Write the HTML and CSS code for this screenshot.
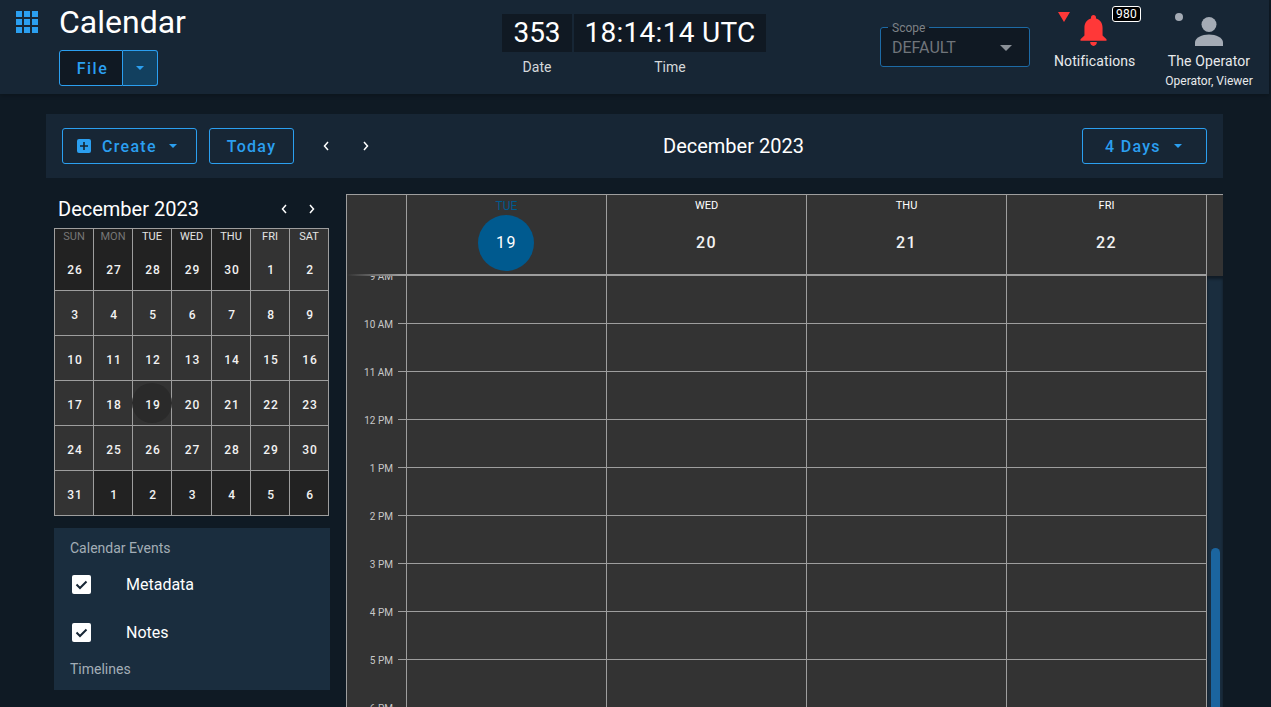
FILE: index.html
```html
<!DOCTYPE html>
<html lang="en">
<head>
    <meta charset="UTF-8">
    <title>Calendar</title>
    <link rel="stylesheet" href="styles.css">
</head>
<body>
    <header class="app-bar">
        <div class="brand">
            <svg class="apps-icon" width="22" height="22" viewBox="0 0 22 22" fill="#2b9ff0">
                <rect x="0" y="0" width="6" height="6"/><rect x="8" y="0" width="6" height="6"/><rect x="16" y="0" width="6" height="6"/>
                <rect x="0" y="8" width="6" height="6"/><rect x="8" y="8" width="6" height="6"/><rect x="16" y="8" width="6" height="6"/>
                <rect x="0" y="16" width="6" height="6"/><rect x="8" y="16" width="6" height="6"/><rect x="16" y="16" width="6" height="6"/>
            </svg>
            <div class="brand-text">
                <h1>Calendar</h1>
                <div class="split-btn">
                    <button class="split-main">File</button>
                    <button class="split-caret"><svg width="8" height="4" viewBox="0 0 8 4"><path d="M0 0h8L4 4z" fill="#2b9ff0"/></svg></button>
                </div>
            </div>
        </div>

        <div class="clock">
            <div class="clock-col clock-date">
                <div class="clock-box">353</div>
                <div class="clock-label">Date</div>
            </div>
            <div class="clock-col clock-time">
                <div class="clock-box">18:14:14 UTC</div>
                <div class="clock-label">Time</div>
            </div>
        </div>

        <fieldset class="scope">
            <legend>Scope</legend>
            <span>DEFAULT</span>
            <svg width="12" height="6" viewBox="0 0 12 6"><path d="M0 0h12L6 6z" fill="#8a9097"/></svg>
        </fieldset>

        <div class="notify">
            <span class="notify-flag"></span>
            <span class="notify-count">980</span>
            <svg class="bell" width="27" height="32" viewBox="0 0 28 33" fill="#ff3838">
                <path d="M14 0c1.6 0 2.6 1 2.6 2.6v.9c4.300 1.200 6.800 4.800 6.800 9.500v8.200L27.500 25v1.500H.5V25l4.100-3.800V13c0-4.700 2.500-8.300 6.800-9.500v-.9C11.400 1 12.400 0 14 0z"/>
                <path d="M10.500 28h7c0 2.400-1.400 4-3.500 4s-3.500-1.600-3.500-4z"/>
            </svg>
            <div class="notify-label">Notifications</div>
        </div>

        <div class="user">
            <span class="user-dot"></span>
            <svg class="person" width="28" height="29" viewBox="0 0 28 29" fill="#a4abb5">
                <circle cx="14" cy="7.500" r="7.500"/>
                <path d="M0 29v-3.500C0 20.500 7 17.500 14 17.500s14 3 14 8V29z"/>
            </svg>
            <div class="user-name">The Operator</div>
            <div class="user-role">Operator, Viewer</div>
        </div>
    </header>

    <main class="page">
        <section class="toolbar">
            <button class="btn btn-create">
                <svg width="14" height="14" viewBox="0 0 14 14"><rect width="14" height="14" rx="2" fill="#2b9ff0"/><path d="M6.200 3h1.600v3.200H11v1.600H7.800V11H6.200V7.800H3V6.200h3.200z" fill="#14242f"/></svg>
                <span>Create</span>
                <svg width="8" height="4" viewBox="0 0 8 4"><path d="M0 0h8L4 4z" fill="#2b9ff0"/></svg>
            </button>
            <button class="btn btn-today">Today</button>
            <button class="nav-btn nav-first"><svg width="6" height="10" viewBox="0 0 6 10"><path d="M5 1L1.500 5 5 9" fill="none" stroke="#fff" stroke-width="1.500"/></svg></button>
            <button class="nav-btn"><svg width="6" height="10" viewBox="0 0 6 10"><path d="M1 1l3.500 4L1 9" fill="none" stroke="#fff" stroke-width="1.500"/></svg></button>
            <h2 class="toolbar-title">December 2023</h2>
            <button class="btn btn-range">
                <span>4 Days</span>
                <svg width="8" height="4" viewBox="0 0 8 4"><path d="M0 0h8L4 4z" fill="#2b9ff0"/></svg>
            </button>
        </section>

        <div class="content">
            <aside class="sidebar">
                <div class="mini-head">
                    <span class="mini-title">December 2023</span>
                    <svg class="mini-prev" width="6" height="10" viewBox="0 0 6 10"><path d="M5 1L1.500 5 5 9" fill="none" stroke="#fff" stroke-width="1.500"/></svg>
                    <svg class="mini-next" width="6" height="10" viewBox="0 0 6 10"><path d="M1 1l3.500 4L1 9" fill="none" stroke="#fff" stroke-width="1.500"/></svg>
                </div>
                <div class="mini-grid">
                    <div class="cell top muted"><span class="wd dim">SUN</span><span>26</span></div>
                    <div class="cell top muted"><span class="wd dim">MON</span><span>27</span></div>
                    <div class="cell top muted"><span class="wd">TUE</span><span>28</span></div>
                    <div class="cell top muted"><span class="wd">WED</span><span>29</span></div>
                    <div class="cell top muted"><span class="wd">THU</span><span>30</span></div>
                    <div class="cell top"><span class="wd">FRI</span><span>1</span></div>
                    <div class="cell top"><span class="wd">SAT</span><span>2</span></div>

                    <div class="cell"><span>3</span></div>
                    <div class="cell"><span>4</span></div>
                    <div class="cell"><span>5</span></div>
                    <div class="cell"><span>6</span></div>
                    <div class="cell"><span>7</span></div>
                    <div class="cell"><span>8</span></div>
                    <div class="cell"><span>9</span></div>

                    <div class="cell"><span>10</span></div>
                    <div class="cell"><span>11</span></div>
                    <div class="cell"><span>12</span></div>
                    <div class="cell"><span>13</span></div>
                    <div class="cell"><span>14</span></div>
                    <div class="cell"><span>15</span></div>
                    <div class="cell"><span>16</span></div>

                    <div class="cell"><span>17</span></div>
                    <div class="cell"><span>18</span></div>
                    <div class="cell today"><span>19</span></div>
                    <div class="cell"><span>20</span></div>
                    <div class="cell"><span>21</span></div>
                    <div class="cell"><span>22</span></div>
                    <div class="cell"><span>23</span></div>

                    <div class="cell"><span>24</span></div>
                    <div class="cell"><span>25</span></div>
                    <div class="cell"><span>26</span></div>
                    <div class="cell"><span>27</span></div>
                    <div class="cell"><span>28</span></div>
                    <div class="cell"><span>29</span></div>
                    <div class="cell"><span>30</span></div>

                    <div class="cell"><span>31</span></div>
                    <div class="cell muted"><span>1</span></div>
                    <div class="cell muted"><span>2</span></div>
                    <div class="cell muted"><span>3</span></div>
                    <div class="cell muted"><span>4</span></div>
                    <div class="cell muted"><span>5</span></div>
                    <div class="cell muted"><span>6</span></div>
                </div>

                <div class="events">
                    <div class="events-title">Calendar Events</div>
                    <label class="check-row">
                        <svg width="19" height="19" viewBox="0 0 19 19"><rect width="19" height="19" rx="2" fill="#fff"/><path d="M4.500 9.500l3.500 3.500 6.500-6.500" fill="none" stroke="#172635" stroke-width="2"/></svg>
                        <span>Metadata</span>
                    </label>
                    <label class="check-row">
                        <svg width="19" height="19" viewBox="0 0 19 19"><rect width="19" height="19" rx="2" fill="#fff"/><path d="M4.500 9.500l3.500 3.500 6.500-6.500" fill="none" stroke="#172635" stroke-width="2"/></svg>
                        <span>Notes</span>
                    </label>
                    <div class="events-title timelines">Timelines</div>
                </div>
            </aside>

            <section class="week">
                <div class="week-head">
                    <div class="head-gutter"></div>
                    <div class="head-day is-today"><span class="head-wd">TUE</span><span class="head-num">19</span></div>
                    <div class="head-day"><span class="head-wd">WED</span><span class="head-num">20</span></div>
                    <div class="head-day"><span class="head-wd">THU</span><span class="head-num">21</span></div>
                    <div class="head-day"><span class="head-wd">FRI</span><span class="head-num">22</span></div>
                    <div class="head-end"></div>
                </div>
                <div class="week-body">
                    <div class="hours">
                        <div class="hour"><span class="hour-label">9 AM</span><i></i><b></b><b></b><b></b><b></b></div>
                        <div class="hour"><span class="hour-label">10 AM</span><i></i><b></b><b></b><b></b><b></b></div>
                        <div class="hour"><span class="hour-label">11 AM</span><i></i><b></b><b></b><b></b><b></b></div>
                        <div class="hour"><span class="hour-label">12 PM</span><i></i><b></b><b></b><b></b><b></b></div>
                        <div class="hour"><span class="hour-label">1 PM</span><i></i><b></b><b></b><b></b><b></b></div>
                        <div class="hour"><span class="hour-label">2 PM</span><i></i><b></b><b></b><b></b><b></b></div>
                        <div class="hour"><span class="hour-label">3 PM</span><i></i><b></b><b></b><b></b><b></b></div>
                        <div class="hour"><span class="hour-label">4 PM</span><i></i><b></b><b></b><b></b><b></b></div>
                        <div class="hour"><span class="hour-label">5 PM</span><i></i><b></b><b></b><b></b><b></b></div>
                        <div class="hour"><span class="hour-label">6 PM</span><i></i><b></b><b></b><b></b><b></b></div>
                    </div>
                    <div class="scroll-track"><div class="scroll-thumb"></div></div>
                </div>
            </section>
        </div>
    </main>
</body>
</html>
```

FILE: styles.css
```css
* { box-sizing: border-box; }
html, body { height: 707px; overflow: hidden; }
body { margin: 0; background-color: #0f1a24; font-family: Roboto, "Liberation Sans", sans-serif; color: #fff; }
button { font-family: inherit; cursor: pointer; }
h1, h2 { margin: 0; font-weight: 400; }

/* top bar */
.app-bar { display: flex; width: 1269px; height: 94px; background-color: #172635; box-shadow: 0 2px 4px rgba(0,0,0,0.2); }
.brand { display: flex; width: 502px; }
.apps-icon { margin: 11px 0 0 16px; }
.brand-text { margin-left: 21px; padding-top: 3px; }
.brand-text h1 { font-size: 32px; line-height: 38px; }
.split-btn { display: flex; margin-top: 9px; height: 36px; width: 99px; }
.split-main { width: 64px; background-color: #101923; border: 1px solid #2b9ff0; border-radius: 3px 0 0 3px; color: #2b9ff0; font-size: 16px; font-weight: 500; letter-spacing: 1.5px; padding: 0 0 0 3px; }
.split-caret { width: 35px; background-color: #12405f; border: 1px solid #2b9ff0; border-left: 0; border-radius: 0 3px 3px 0; padding: 0; display: flex; align-items: center; justify-content: center; }

.clock { display: flex; padding-top: 14px; gap: 2px; width: 264px; }
.clock-col { text-align: center; }
.clock-date { width: 70px; }
.clock-time { width: 192px; }
.clock-box { height: 38px; line-height: 38px; background-color: #101923; font-size: 28px; }
.clock-time .clock-box { letter-spacing: 0.3px; }
.clock-label { margin-top: 7px; font-size: 14px; line-height: 16px; color: #d5d8db; }

.scope { display: flex; align-items: center; justify-content: space-between; width: 150px; height: 47px; margin: 20px 0 0 114px; padding: 0 17px 0 11px; border: 1px solid #1d6aa5; border-radius: 3px; background-color: #101923; color: #70757b; font-size: 16px; }
.scope legend { position: relative; top: 1px; font-size: 12px; line-height: 14px; padding: 0 4px; margin-left: -4px; color: #7d8287; }
.scope span { position: relative; top: -3px; }
.scope svg { position: relative; top: -2px; }

.notify { position: relative; width: 81px; margin-left: 24px; padding-top: 15px; text-align: center; }
.bell { display: block; margin-left: 26px; }
.notify-flag { position: absolute; left: 4px; top: 12px; border-style: solid; border-width: 10px 6px 0; border-color: #ff3838 transparent transparent; }
.notify-count { position: absolute; left: 58px; top: 6px; width: 29px; height: 16px; background-color: #000; border: 1px solid #fff; border-radius: 3px; font-size: 12px; line-height: 14px; text-align: center; letter-spacing: 0.3px; }
.notify-label { margin-top: 6px; font-size: 14px; line-height: 16px; letter-spacing: 0.1px; color: #e8eaec; white-space: nowrap; }

.user { position: relative; width: 90px; margin-left: 29px; padding-top: 17px; text-align: center; }
.person { display: block; margin: 0 auto; }
.user-dot { position: absolute; left: 11px; top: 13px; width: 8px; height: 8px; border-radius: 50%; background-color: #a4abb5; }
.user-name { margin-top: 7px; font-size: 14px; line-height: 16px; letter-spacing: 0.1px; color: #e8eaec; }
.user-role { margin-top: 5px; font-size: 12px; line-height: 14px; color: #e8eaec; white-space: nowrap; }

/* page */
.page { width: 1177px; margin: 20px 0 0 46px; }
.toolbar { display: flex; align-items: center; height: 64px; padding: 0 16px; background-color: #172635; }
.btn { display: flex; align-items: center; height: 36px; background: none; border: 1px solid #2b9ff0; border-radius: 3px; color: #2b9ff0; font-size: 16px; font-weight: 500; letter-spacing: 1.3px; padding: 0; }
.btn-create { width: 135px; padding-left: 14px; }
.btn-create span { margin: 0 12px 0 11px; }
.btn-today { width: 85px; margin-left: 12px; justify-content: center; }
.btn-range { width: 125px; padding-left: 22px; }
.btn-range span { margin-right: 13px; }
.nav-btn { display: flex; align-items: center; justify-content: center; width: 40px; height: 36px; background: none; border: 0; padding: 0; }
.nav-first { margin-left: 12px; }
.toolbar-title { margin-left: 277px; margin-right: auto; font-size: 20px; line-height: 24px; }

.content { display: flex; margin-top: 16px; }
.sidebar { width: 300px; padding-left: 8px; }
.mini-head { display: flex; align-items: center; height: 34px; padding: 0 0 4px 4px; }
.mini-title { font-size: 20px; line-height: 24px; width: 223px; }
.mini-next { margin-left: 22px; }

.mini-grid { display: grid; grid-template-columns: 39px 39px 39px 40px 39px 39px 39px; grid-template-rows: 62px; grid-auto-rows: 45px; width: 275px; border-top: 1px solid #9e9e9e; border-left: 1px solid #9e9e9e; }
.cell { position: relative; display: flex; flex-direction: column; align-items: center; justify-content: flex-end; padding-bottom: 12px; background-color: #333; border-right: 1px solid #9e9e9e; border-bottom: 1px solid #9e9e9e; font-size: 12px; font-weight: 500; line-height: 16px; letter-spacing: 0.9px; color: #f2f2f2; }
.cell span { position: relative; }
.cell span:last-child { left: 1px; }
.cell.muted { background-color: #222; }
.wd { margin-bottom: auto; font-size: 11px; font-weight: 400; letter-spacing: 0; color: #e4e4e4; }
.wd.dim { color: #777; }
.today::before { content: ""; position: absolute; left: -1px; top: 2px; width: 40px; height: 40px; border-radius: 50%; background-color: #2a2a2a; }

.events { width: 276px; height: 162px; margin-top: 12px; padding: 12px 16px; background-color: #1a2d3e; }
.events-title { font-size: 14px; line-height: 16px; color: #a3adb6; }
.check-row { display: flex; align-items: center; height: 48px; padding-left: 2px; font-size: 16px; }
.check-row:first-of-type { margin-top: 4px; }
.check-row span { margin-left: 35px; }
.timelines { padding-top: 5px; }

/* week view */
.week { width: 877px; height: 513px; overflow: hidden; border-top: 1px solid #9e9e9e; border-left: 1px solid #9e9e9e; background-color: #333; }
.week-head { display: flex; height: 81px; }
.head-gutter { width: 59px; background: linear-gradient(to right, transparent, #9e9e9e 52px) bottom / 100% 2px no-repeat; }
.head-day { display: flex; flex-direction: column; align-items: center; width: 200px; border-left: 1px solid #9e9e9e; border-bottom: 2px solid #9e9e9e; }
.head-wd { margin-top: 4px; font-size: 11px; line-height: 13px; }
.head-num { margin-top: 21px; font-size: 16px; font-weight: 500; line-height: 20px; letter-spacing: 1.5px; color: #f2f2f2; }
.is-today .head-wd { margin-top: 5px; color: #005a8f; font-size: 12px; line-height: 13px; }
.is-today .head-num { display: flex; align-items: center; justify-content: center; width: 56px; height: 56px; margin: 2px 2px 0 0; padding-left: 2px; border-radius: 50%; background-color: #005a8f; font-weight: 400; color: #fff; }
.head-end { width: 17px; border-left: 1px solid #9e9e9e; }

.week-body { display: flex; height: 431px; overflow: hidden; }
.hours { width: 860px; }
.hour { display: grid; grid-template-columns: 51px 8px 200px 200px 200px 200px; height: 48px; }
.hour:first-child { height: 47px; }
.hour i { border-top: 1px solid #9e9e9e; }
.hour b { border-top: 1px solid #9e9e9e; border-left: 1px solid #9e9e9e; }
.hour:first-child i, .hour:first-child b { border-top: 0; }
.hour-label { margin-top: -5px; padding-right: 5px; height: 14px; font-size: 10px; line-height: 14px; text-align: right; color: #c8c8c8; white-space: nowrap; }
.hour:first-child .hour-label { margin-top: -6px; }
.scroll-track { width: 17px; border-left: 1px solid #9e9e9e; background-color: #1a2d3e; box-shadow: inset 0 3px 3px rgba(0,0,0,0.4); padding: 272px 0 0 4px; }
.scroll-thumb { width: 9px; height: 300px; border-radius: 5px 5px 0 0; background-color: #1b659f; }
```
